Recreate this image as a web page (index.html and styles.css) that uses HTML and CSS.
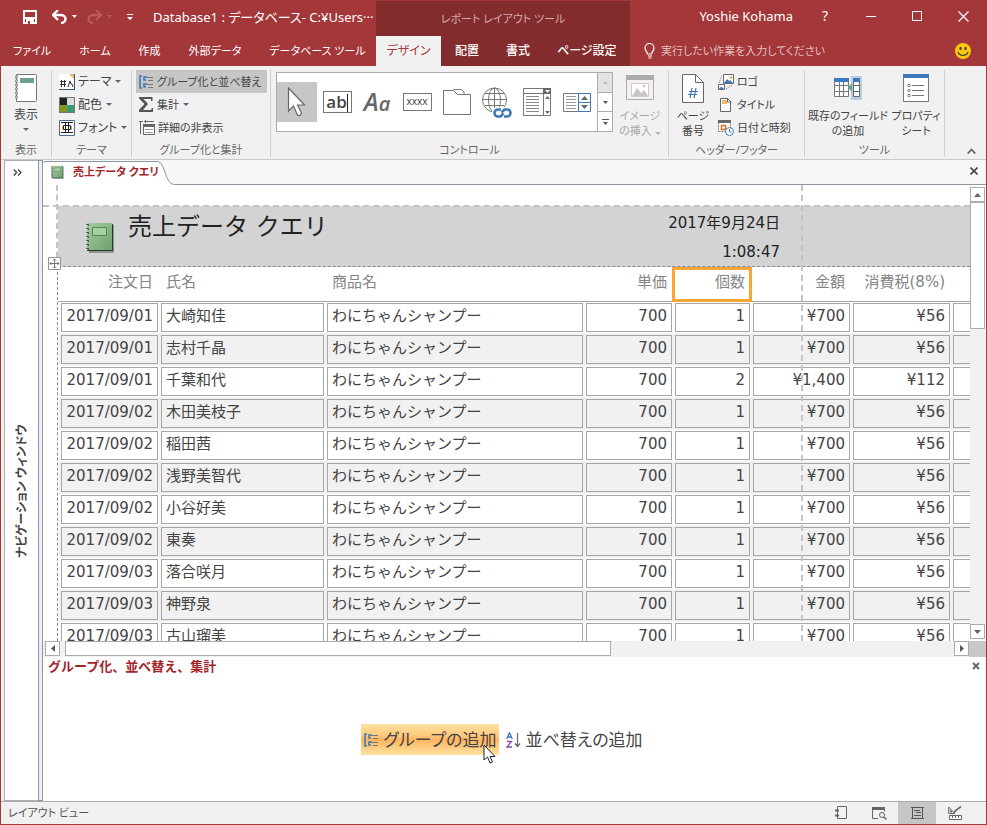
FILE: index.html
```html
<!DOCTYPE html>
<html lang="ja">
<head>
<meta charset="utf-8">
<title>Database1 : データベース</title>
<link rel="stylesheet" href="styles.css">
</head>
<body>
<div class="app">
  <header class="head">
    <div class="quick">
      <button class="qbtn" aria-label="上書き保存"><svg width="14" height="14" viewBox="0 0 14 14"><path d="M1 1h12v12H1z" fill="none" stroke="#fff" stroke-width="2"/><path d="M1 7h12v2H1zM3 9h8v5H3z" fill="#fff"/><path d="M5 11h2v3H5z" fill="#a4373a"/></svg></button>
      <button class="qbtn undo" aria-label="元に戻す"><svg width="26" height="14" viewBox="0 0 26 14"><path d="M6 0L1 5l5 5M2 5h7c6 0 6 8 0 8" fill="none" stroke="#fff" stroke-width="2.400"/><path d="M20 5h5l-2.500 3z" fill="#fff"/></svg></button>
      <button class="qbtn redo" aria-label="やり直し"><svg width="26" height="14" viewBox="0 0 26 14"><path d="M9 0l5 5-5 5M13 5H6C0 5 0 13 6 13" fill="none" stroke="#b9585b" stroke-width="2.400"/><path d="M20 5h5l-2.500 3z" fill="#b9585b"/></svg></button>
      <button class="qbtn more" aria-label="カスタマイズ"><svg width="6" height="7" viewBox="0 0 6 7"><path d="M0 0h6v1H0zM0 3h6L3 6z" fill="#fff"/></svg></button>
      <span class="apptitle">Database1 : データベース- C:¥Users···</span>
    </div>
    <div class="ctxtitle">レポート レイアウト ツール</div>
    <div class="winbar">
      <span class="user">Yoshie Kohama</span>
      <button class="wbtn help" aria-label="ヘルプ">?</button>
      <button class="wbtn" aria-label="最小化"><svg width="10" height="10"><path d="M0 5h10v1H0z" fill="#fff"/></svg></button>
      <button class="wbtn" aria-label="最大化"><svg width="10" height="10"><path d="M.5.5h9v9h-9z" fill="none" stroke="#fff"/></svg></button>
      <button class="wbtn" aria-label="閉じる"><svg width="11" height="11"><path d="M.5.5l10 10M10.500.5l-10 10" fill="none" stroke="#fff" stroke-width="1.2"/></svg></button>
    </div>
    <nav class="tabs">
      <button>ファイル</button><button>ホーム</button><button>作成</button><button>外部データ</button><button>データベース ツール</button>
    </nav>
    <nav class="tabs ctx">
      <button class="on">デザイン</button><button>配置</button><button>書式</button><button>ページ設定</button>
    </nav>
    <div class="tell">
      <svg width="12" height="16" viewBox="0 0 12 16"><path d="M3.500 11c0-2-2.500-3-2.500-6a4.500 4.500 0 0 1 9 0c0 3-2.500 4-2.500 6zM4 13h4M4.500 15h3" fill="none" stroke="#fff" stroke-width="1.200"/></svg>
      <input type="text" aria-label="操作アシスト" placeholder="実行したい作業を入力してください">
      <button class="smile" aria-label="フィードバック"><svg width="16" height="16" viewBox="0 0 16 16"><circle cx="8" cy="8" r="8" fill="#fdc70c"/><ellipse cx="5.500" cy="5.500" rx="1.200" ry="1.800" fill="#444"/><ellipse cx="10.500" cy="5.500" rx="1.200" ry="1.800" fill="#444"/><path d="M3 9c1.500 4.500 8.500 4.500 10 0" fill="none" stroke="#444" stroke-width="1.300"/></svg></button>
    </div>
  </header>

  <section class="ribbon">
    <div class="group g-view">
      <div class="gbody">
        <button class="big"><svg width="26" height="30" viewBox="0 0 26 30"><path d="M3.500 1.500h19a1 1 0 0 1 1 1v25a1 1 0 0 1-1 1h-19z" fill="#fff" stroke="#777"/><path d="M7 5h14v5H7z" fill="#6f9f90"/><path d="M2 4h3M2 8h3M2 12h3M2 16h3M2 20h3M2 24h3" stroke="#777" stroke-width="2.500"/><path d="M2.500 4h2M2.500 8h2M2.500 12h2M2.500 16h2M2.500 20h2M2.500 24h2" stroke="#fff"/></svg><span>表示</span><i class="caret"></i></button>
      </div>
      <h2>表示</h2>
    </div>
    <div class="group g-theme">
      <div class="gbody col">
        <button class="small"><svg width="16" height="16" viewBox="0 0 16 16"><path d="M0 0h16v16H0z" fill="#fff"/><path d="M0 15h16v1H0z" fill="#345678"/><path d="M15 0h1v16h-1z" fill="#345678"/><path d="M10 0h5v5z" fill="#e8b96a"/><path d="M1 7.500h6M1 10.500h6M2.500 6v7M5.500 6v7M9 13l2-6 1 3h1l1 3" fill="none" stroke="#333"/></svg>テーマ<i class="caret"></i></button>
        <button class="small"><svg width="16" height="16" viewBox="0 0 16 16"><path d="M0 0h16v16H0z" fill="#777"/><path d="M1 1h7v7H1z" fill="#222"/><path d="M8 1h7v7H8z" fill="#dbdbe0"/><path d="M1 8h7v7H1z" fill="#85961f"/><path d="M8 8h7v7H8z" fill="#3c9b72"/></svg>配色<i class="caret"></i></button>
        <button class="small"><svg width="16" height="16" viewBox="0 0 16 16"><path d="M.5.5h15v15H.5z" fill="#fff" stroke="#4a6a93"/><path d="M3 6h1v4H3zM12 6h1v4h-1z" fill="#e8a548"/><path d="M2 2.500h12M2 12.500h12M4.500 5.500h7v4h-7zM6.500 2.500v10M9.500 2.500v10" fill="none" stroke="#222"/></svg>フォント<i class="caret"></i></button>
      </div>
      <h2>テーマ</h2>
    </div>
    <div class="group g-sort">
      <div class="gbody col">
        <button class="small on"><svg width="15" height="14" viewBox="0 0 15 14"><use href="#grp"/></svg>グループ化と並べ替え</button>
        <button class="small"><svg width="15" height="15" viewBox="0 0 15 15"><path d="M0 0h13.500v4H12V2H4.500l4.500 5-5 6h8.500v-2H14v4H0v-2l5.500-6L0 1.500z" fill="#555"/></svg>集計<i class="caret"></i></button>
        <button class="small"><svg width="16" height="15" viewBox="0 0 16 15"><path d="M0 1.500h4M1.500 1v13M6.500 0v3M5 1.500h10" stroke="#666" fill="none"/><path d="M4.500 4.500h11v10h-11z" fill="#fff" stroke="#666"/><path d="M4 4h12v3H4z" fill="#666"/><path d="M6 9.500h8M6 12.500h8" stroke="#999"/></svg>詳細の非表示</button>
      </div>
      <h2>グループ化と集計</h2>
    </div>
    <div class="group g-ctl">
      <div class="gbody">
        <div class="gallery">
          <button class="on" aria-label="選択"><svg width="20" height="30" viewBox="0 0 20 30"><path d="M1.500 1v23l5-5 4 9q3 2 4-2l-4-8h7z" fill="#fff" stroke="#666" stroke-width="1.200"/></svg></button>
          <button aria-label="テキスト ボックス"><span class="abox">ab</span></button>
          <button aria-label="ラベル"><span class="aa">A<small>a</small></span></button>
          <button aria-label="ボタン"><span class="xbox">xxxx</span></button>
          <button aria-label="タブ"><svg width="28" height="26" viewBox="0 0 28 26"><path d="M.5 25.500V1.500h10l4 4h13v20z" fill="#fff" stroke="#777"/><path d="M10.500.5h8l2.500 2.500v2" fill="none" stroke="#777"/></svg></button>
          <button aria-label="ハイパーリンク"><svg width="31" height="31" viewBox="0 0 31 31"><g fill="none" stroke="#777"><circle cx="12.500" cy="13" r="12"/><ellipse cx="12.500" cy="13" rx="6" ry="12"/><path d="M12.500 1v24M1 12.500h23M3 6.500h19M3 18.500h19"/></g><rect x="10" y="20" width="21" height="11" rx="5" fill="#fff"/><g fill="none" stroke="#3f78b8" stroke-width="2.600"><path d="M19 22.500h-3a3.500 3.500 0 0 0 0 7h2.500l3-3"/><path d="M22 29.500h3a3.500 3.500 0 0 0 0-7h-2.500l-3 3"/></g></svg></button>
          <button aria-label="コンボ ボックス"><svg width="28" height="28" viewBox="0 0 28 28"><path d="M.5.5h27v27H.5zM0 5.500h28M20.500 5v23" fill="#fff" stroke="#777"/><path d="M20 0h8v6h-8z" fill="#666"/><path d="M22 2h5l-2.500 3z" fill="#fff"/><path d="M3 8.500h13M3 11.500h13M3 14.500h13M3 17.500h13M3 20.500h13M3 23.500h13" stroke="#888"/><path d="M22 11h5l-2.500-3zM22 23h5l-2.500 3z" fill="#666"/></svg></button>
          <button aria-label="リスト ボックス"><svg width="28" height="19" viewBox="0 0 28 19"><path d="M.5.5h15v18H.5z" fill="#fff" stroke="#777"/><path d="M3 3.500h10M3 6.500h10M3 9.500h10M3 12.500h10M3 15.500h10" stroke="#999"/><path d="M15.500.5h12v18h-12zM15 9.500h13" fill="#fff" stroke="#3f78b8"/><path d="M18 7h7l-3.500-4zM18 12h7l-3.500 4z" fill="#666"/></svg></button>
          <div class="gscroll">
            <button class="dis" aria-label="上へ"><svg width="5" height="3"><path d="M0 3h5L2.500 0z" fill="#bbb"/></svg></button>
            <button aria-label="下へ"><svg width="5" height="3"><path d="M0 0h5L2.500 3z" fill="#555"/></svg></button>
            <button aria-label="その他"><svg width="7" height="6"><path d="M0 0h7v1H0zM1 3h5L3.500 6z" fill="#555"/></svg></button>
          </div>
        </div>
        <button class="big dis image"><svg width="28" height="26" viewBox="0 0 28 26"><path d="M.5.5h27v24H.5z" fill="#f6f0f5" stroke="#aaa"/><path d="M0 0h28v5H0z" fill="#aaa"/><path d="M5.500 8.500h17v13h-17z" fill="#fff" stroke="#ccc"/><path d="M6 21l5-8 4 5 3-3 4 6z" fill="#c8c4ca"/><circle cx="18" cy="11" r="1.500" fill="#ccc"/></svg><span>イメージ<br>の挿入 <i class="caret"></i></span></button>
      </div>
      <h2>コントロール</h2>
    </div>
    <div class="group g-hf">
      <div class="gbody">
        <button class="big page"><svg width="22" height="29" viewBox="0 0 22 29"><path d="M.5.5h13l8 8v20H.5z" fill="#fff" stroke="#666"/><path d="M13.500.5v8h8" fill="none" stroke="#666"/><path d="M10 14l-2 10M14 14l-2 10M7 17.500h9M6 20.500h9" stroke="#3f78b8" stroke-width="1.200"/></svg><span>ページ<br>番号</span></button>
        <div class="col">
          <button class="small"><svg width="16" height="16" viewBox="0 0 16 16"><path d="M5.500.5h10v9h-10z" fill="#fff" stroke="#666"/><path d="M6 9l3-4 2 2 1-1 3 3z" fill="#3f78b8"/><circle cx="13" cy="3.500" r="1.200" fill="#e39b3c"/><path d="M.5 10.500h6v5h-6z" fill="#fff" stroke="#666"/><path d="M1 15l2-2.500 3 2.500z" fill="#3f78b8"/><path d="M1 9l3-8M8 15l6-4" stroke="#777" stroke-dasharray="1 1"/></svg>ロゴ</button>
          <button class="small"><svg width="16" height="16" viewBox="0 0 16 16"><path d="M2.500 1.500h7l3 3v10h-10z" fill="#fff" stroke="#666"/><path d="M9.500 1v4h4" fill="none" stroke="#666"/><path d="M4 3h5v4H4z" fill="#efb96c"/></svg>タイトル</button>
          <button class="small"><svg width="16" height="16" viewBox="0 0 16 16"><path d="M.5.5h12v11H.5z" fill="#fff" stroke="#777" stroke-dasharray="2 1"/><path d="M0 0h13v3H0z" fill="#666"/><path d="M3.500 5.500h4v4h-4z" fill="#fff" stroke="#d5701c" stroke-width="1.500"/><circle cx="11.500" cy="11.500" r="4" fill="#fff" stroke="#3f78b8"/><path d="M11.500 9v3h2" fill="none" stroke="#3f78b8"/></svg>日付と時刻</button>
        </div>
      </div>
      <h2>ヘッダー/フッター</h2>
    </div>
    <div class="group g-tool">
      <div class="gbody">
        <button class="big field"><svg width="28" height="24" viewBox="0 0 28 24"><path d="M17 0h11v24H17z" fill="#b9cde3"/><path d="M.5 3.500h14v17H.5zM0 9.500h15M0 15.500h15M5.500 6v15M9.500 6v15" fill="#fff" stroke="#777"/><path d="M0 2h15v4H0z" fill="#3f78b8"/><path d="M19.500 3.500h6v17h-6zM19 9.500h7M19 15.500h7" fill="#fff" stroke="#666"/><path d="M19 2h7v4h-7z" fill="#3f78b8"/><path d="M18 7v9l-4-4.500z" fill="#5ba287"/></svg><span>既存のフィールド<br>の追加</span></button>
        <button class="big prop"><svg width="26" height="28" viewBox="0 0 26 28"><path d="M.5.5h25v27H.5z" fill="#fff" stroke="#777"/><path d="M0 0h26v4H0z" fill="#3f78b8"/><path d="M9 11.500h12M9 16.500h12M9 21.500h12" stroke="#777"/><g fill="none" stroke="#777"><circle cx="6" cy="11.500" r="1.200"/><circle cx="6" cy="16.500" r="1.200"/><circle cx="6" cy="21.500" r="1.200"/></g></svg><span>プロパティ<br>シート</span></button>
      </div>
      <h2>ツール</h2>
    </div>
    <button class="collapse" aria-label="リボンを折りたたむ"><svg width="9" height="6"><path d="M.7 5.500l3.800-4 3.800 4" fill="none" stroke="#666" stroke-width="1.800"/></svg></button>
  </section>

  <main class="work">
    <aside class="nav">
      <button class="open" aria-label="ナビゲーション ウィンドウを開く"><svg width="9" height="7"><path d="M.7.5l3 3-3 3M5 .5l3 3-3 3" fill="none" stroke="#444" stroke-width="1.300"/></svg></button>
      <span>ナビゲーション ウィンドウ</span>
    </aside>
    <div class="split"></div>
    <div class="doc">
      <div class="doctabs">
        <div class="doctab"><svg width="14" height="14" viewBox="0 0 32 32"><use href="#book"/></svg>売上データ クエリ</div>
        <svg class="slope" width="16" height="24" viewBox="0 0 16 24"><path d="M0 0C6 0 6 23.500 16 23.500V24H0z" fill="#fff"/><path d="M0 .5C7 1 7 23.500 16 23.500" fill="none" stroke="#8f95a0"/></svg>
        <div class="rest"><button class="close" aria-label="閉じる"><svg width="8" height="8"><path d="M.5.5l7 7M7.500.5l-7 7" stroke="#444" stroke-width="1.600"/></svg></button></div>
      </div>
      <div class="view">
        <div class="report">
          <div class="rhead">
            <svg class="logo" width="32" height="32" viewBox="0 0 32 32"><use href="#book"/></svg>
            <h1>売上データ クエリ</h1>
            <div class="when"><div>2017年9月24日</div><div>1:08:47</div></div>
          </div>
          <table>
            <colgroup><col class="c1"><col class="c2"><col class="c3"><col class="c4"><col class="c5"><col class="c6"><col class="c7"><col></colgroup>
            <thead><tr><th class="n">注文日</th><th>氏名</th><th>商品名</th><th class="n">単価</th><th class="n sel">個数</th><th class="n">金額</th><th class="n">消費税(8%)</th><th></th></tr></thead>
            <tbody>
<tr><td class="n">2017/09/01</td><td>大崎知佳</td><td>わにちゃんシャンプー</td><td class="n">700</td><td class="n">1</td><td class="n">¥700</td><td class="n">¥56</td><td></td></tr>
<tr><td class="n">2017/09/01</td><td>志村千晶</td><td>わにちゃんシャンプー</td><td class="n">700</td><td class="n">1</td><td class="n">¥700</td><td class="n">¥56</td><td></td></tr>
<tr><td class="n">2017/09/01</td><td>千葉和代</td><td>わにちゃんシャンプー</td><td class="n">700</td><td class="n">2</td><td class="n">¥1,400</td><td class="n">¥112</td><td></td></tr>
<tr><td class="n">2017/09/02</td><td>木田美枝子</td><td>わにちゃんシャンプー</td><td class="n">700</td><td class="n">1</td><td class="n">¥700</td><td class="n">¥56</td><td></td></tr>
<tr><td class="n">2017/09/02</td><td>稲田茜</td><td>わにちゃんシャンプー</td><td class="n">700</td><td class="n">1</td><td class="n">¥700</td><td class="n">¥56</td><td></td></tr>
<tr><td class="n">2017/09/02</td><td>浅野美智代</td><td>わにちゃんシャンプー</td><td class="n">700</td><td class="n">1</td><td class="n">¥700</td><td class="n">¥56</td><td></td></tr>
<tr><td class="n">2017/09/02</td><td>小谷好美</td><td>わにちゃんシャンプー</td><td class="n">700</td><td class="n">1</td><td class="n">¥700</td><td class="n">¥56</td><td></td></tr>
<tr><td class="n">2017/09/02</td><td>東奏</td><td>わにちゃんシャンプー</td><td class="n">700</td><td class="n">1</td><td class="n">¥700</td><td class="n">¥56</td><td></td></tr>
<tr><td class="n">2017/09/03</td><td>落合咲月</td><td>わにちゃんシャンプー</td><td class="n">700</td><td class="n">1</td><td class="n">¥700</td><td class="n">¥56</td><td></td></tr>
<tr><td class="n">2017/09/03</td><td>神野泉</td><td>わにちゃんシャンプー</td><td class="n">700</td><td class="n">1</td><td class="n">¥700</td><td class="n">¥56</td><td></td></tr>
<tr><td class="n">2017/09/03</td><td>古山瑠美</td><td>わにちゃんシャンプー</td><td class="n">700</td><td class="n">1</td><td class="n">¥700</td><td class="n">¥56</td><td></td></tr>
            </tbody>
          </table>
          <div class="guide left"></div><div class="guide dots"></div><div class="guide right"></div><div class="guide top"></div>
          <svg class="move" width="13" height="13" viewBox="0 0 13 13"><path d="M.5.5h12v12H.5z" fill="#fff" stroke="#8f959c"/><path d="M6.500 2v9M2 6.500h9M5 3.500l1.500-1.500L8 3.500M5 9.500L6.500 11 8 9.500M3.500 5L2 6.500 3.500 8M9.500 5L11 6.500 9.500 8" fill="none" stroke="#777"/></svg>
        </div>
        <div class="vscroll">
          <button class="sb" aria-label="上へ"><svg width="7" height="4"><path d="M0 4h7L3.500 0z" fill="#666"/></svg></button>
          <div class="vthumb"></div><div class="track"></div>
          <button class="sb" aria-label="下へ"><svg width="7" height="4"><path d="M0 0h7L3.500 4z" fill="#666"/></svg></button>
        </div>
      </div>
      <div class="hscroll">
        <button class="sb" aria-label="左へ"><svg width="4" height="7"><path d="M4 0v7L0 3.500z" fill="#555"/></svg></button>
        <div class="hthumb"></div><div class="track"></div>
        <button class="sb" aria-label="右へ"><svg width="4" height="7"><path d="M0 0v7l4-3.500z" fill="#555"/></svg></button>
        <div class="corner"></div>
      </div>
      <section class="gpane">
        <div class="gtitle"><h2>グループ化、並べ替え、集計</h2><button class="close" aria-label="閉じる"><svg width="8" height="8"><path d="M1 1l6 6M7 1L1 7" stroke="#666" stroke-width="2"/></svg></button></div>
        <div class="gactions">
          <button class="hot"><svg width="15" height="14" viewBox="0 0 15 14"><use href="#grp"/></svg>グループの追加<svg class="cursor" width="13" height="20" viewBox="0 0 13 20"><path d="M1 1v15l3.500-3 2.500 6 2.500-1-2.500-5.500h5z" fill="#fff" stroke="#223"/></svg></button>
          <button><svg width="15" height="16" viewBox="0 0 15 16"><path d="M.7 7L3.500.7 6.300 7M1.500 5h4" fill="none" stroke="#3f78b8" stroke-width="1.300"/><path d="M1 9.500h4.500L1 15h5" fill="none" stroke="#8650a8" stroke-width="1.300"/><path d="M11.500 1v13M9 11.500l2.500 3 2.500-3" fill="none" stroke="#666" stroke-width="1.200"/></svg>並べ替えの追加</button>
        </div>
      </section>
    </div>
  </main>

  <footer class="status">
    <span>レイアウト ビュー</span>
    <button aria-label="レポート ビュー"><svg width="14" height="14" viewBox="0 0 14 14"><path d="M3.500.5h9v12h-9z" fill="none" stroke="#666"/><path d="M1 4.500h4M1 9.500h4" stroke="#666" stroke-width="2"/></svg></button>
    <button aria-label="印刷プレビュー"><svg width="15" height="14" viewBox="0 0 15 14"><path d="M6 12.500H.5v-11h12v4" fill="none" stroke="#666"/><path d="M0 1h13v3H0z" fill="#666"/><circle cx="10" cy="9" r="2.500" fill="none" stroke="#666"/><path d="M12 11l2.500 2.500" stroke="#666" stroke-width="1.500"/></svg></button>
    <button class="on" aria-label="レイアウト ビュー"><svg width="13" height="14" viewBox="0 0 13 14"><path d="M0 1.500h13M0 12.500h13M1.500 1v12M11.500 1v12" fill="none" stroke="#555"/><path d="M3 4.500h6M5 6.500h5M3 9.500h7" stroke="#555"/></svg></button>
    <button aria-label="デザイン ビュー"><svg width="15" height="14" viewBox="0 0 15 14"><path d="M.7 1v6.500h6zM2.500 4.500v1.500h1.500z" fill="none" stroke="#666"/><path d="M6 7l1-2 6-4.500" fill="none" stroke="#666" stroke-width="1.600"/><path d="M1.500 9.500h12v4h-12zM4.500 9v3M7.500 9v3M10.500 9v3" fill="#fff" stroke="#666"/></svg></button>
  </footer>
</div>
<svg class="defs" width="0" height="0" aria-hidden="true">
  <defs>
    <linearGradient id="green" x1="0" y1="0" x2="1" y2="1"><stop offset="0" stop-color="#a3cda0"/><stop offset="1" stop-color="#6fa170"/></linearGradient>
    <symbol id="book" viewBox="0 0 32 32"><path d="M6 4h25v28H6z" fill="#555" opacity=".5"/><path d="M4 3h26v27H4z" fill="#1f3f22"/><path d="M4 2h25v27H4z" fill="url(#green)"/><path d="M9.500 6.500h14v8h-14z" fill="#a9d0a5" stroke="#4f8a52"/><path d="M4.500 3v26" stroke="#555" stroke-width="3" stroke-dasharray="2 2"/><path d="M3.500 4v25" stroke="#eee" stroke-width="2" stroke-dasharray="1 3"/></symbol>
    <symbol id="grp" viewBox="0 0 15 14"><path d="M3 1H1v12h2" fill="none" stroke="#3f78b8" stroke-width="1.600"/><path d="M8 2H5v3h2M8 9H5v3h2" fill="none" stroke="#3f78b8" stroke-width="1.600"/><path d="M8 2.500h6M9 5.500h5M8 9.500h6M9 12.500h5" stroke="#777"/></symbol>
  </defs>
</svg>
</body>
</html>
```
FILE: styles.css
```css
* { box-sizing: border-box; }
body {
  margin: 0;
  font: 11px/16px "Noto Sans", "Noto Sans CJK JP", sans-serif;
  font-feature-settings: "palt";
  color: #444;
}
button, input {
  font: inherit;
  font-feature-settings: inherit;
  color: inherit;
  background: none;
  border: 0;
  padding: 0;
  margin: 0;
}
button { display: flex; align-items: center; justify-content: center; white-space: nowrap; }
h1, h2 { margin: 0; font-weight: normal; }
svg { display: block; flex: none; }
.defs { position: absolute; }
.app {
  display: flex;
  flex-direction: column;
  height: 100vh;
  border: 1px solid #a4373a;
  border-top: 0;
  background: #fff;
}

/* title bar and tabs */
.head {
  display: grid;
  grid-template-columns: 375px 254px 1fr;
  grid-template-rows: 36px 30px;
  background: #a4373a;
  color: #fff;
}
.quick { display: flex; align-items: center; padding: 0 0 2px 22px; white-space: nowrap; }
.undo { margin-left: 15px; }
.redo { margin-left: 9px; }
.more { margin-left: 14px; }
.apptitle { margin-left: 20px; font-size: 13px; }
.ctxtitle {
  display: flex;
  align-items: center;
  justify-content: center;
  border-top: 1px solid #a4373a;
  background: #832c2e;
  color: #d9a9aa;
}
.winbar { display: flex; align-items: center; justify-content: flex-end; padding: 0 0 4px; }
.user { margin-right: 9px; font-size: 13px; }
.wbtn { width: 46px; height: 32px; }
.help { font-size: 14px; }
.tabs { display: flex; }
.tabs button { padding: 0 14px; }
.tabs button:first-child { padding-left: 12px; }
.tabs.ctx { background: #832c2e; }
.tabs.ctx button { font-size: 12px; padding: 0 13px 0 14px; flex: none; font-weight: 500; }
.tabs.ctx button.on { background: #f1f1f1; color: #a4373a; width: 65px; padding: 0; font-weight: normal; }
.tell { display: flex; align-items: center; padding: 0 15px 0 14px; gap: 5px; }
.tell input { flex: 1; min-width: 0; outline: 0; }
.tell input::placeholder { color: #e3bfc0; opacity: 1; }

/* ribbon */
.ribbon {
  display: flex;
  padding: 4px 0 2px;
  background: #f1f1f1;
  border-bottom: 1px solid #c9c9c9;
}
.group {
  display: flex;
  flex-direction: column;
  height: 87px;
  border-right: 1px solid #d0d0d0;
}
.group h2 { font-size: 11px; text-align: center; color: #666; line-height: 14px; }
.gbody { display: flex; flex: 1; }
.col { display: flex; flex-direction: column; align-items: flex-start; }
.g-view { width: 51px; }
.g-theme { width: 80px; }
.g-view, .g-theme .small { font-size: 12px; }
.g-sort { width: 139px; }
.g-ctl { width: 398px; }
.g-hf { width: 136px; }
.g-tool { width: 140px; }
.small { height: 23px; gap: 3px; padding: 0 5px; text-align: left; }
.g-theme .small { padding-left: 7px; }
.g-sort .small { margin-left: 4px; padding-left: 3px; }
.small.on { background: #c6c6c6; width: 131px; }
.g-sort .small.on { justify-content: flex-start; }
.big { flex-direction: column; justify-content: flex-start; line-height: 15px; }
.big svg { margin-top: 3px; margin-bottom: 4px; }
.big.dis { color: #a8a8a8; }
.g-view .big { width: 100%; }
.caret {
  display: inline-block;
  width: 0;
  border: 3px solid transparent;
  border-top-color: #666;
  border-bottom-width: 0;
}
.dis .caret { border-top-color: #b5b5b5; }
.small .caret { margin-left: 1px; }
.g-view .caret { margin-top: 6px; }
.gallery {
  display: flex;
  align-items: center;
  width: 337px;
  height: 60px;
  margin: 2px 0 0 5px;
  border: 1px solid #ababab;
  background: #fff;
}
.gallery > button { width: 40px; height: 40px; }
.gallery > button.on { background: #c6c6c6; }
.abox {
  width: 29px;
  height: 22px;
  border: 1px solid #777;
  font: 600 17px/20px "Open Sans", sans-serif;
}
.abox::after { content: ""; display: inline-block; width: 1px; height: 18px; background: #222; vertical-align: middle; }
.aa { font: italic 600 25px/30px "Open Sans", sans-serif; color: #666; }
.aa small { font-size: 20px; }
.xbox { width: 29px; height: 18px; border: 1px solid #777; font-size: 10px; line-height: 15px; }
.gscroll { flex: 1; align-self: stretch; display: flex; flex-direction: column; border-left: 1px solid #ababab; }
.gscroll button { flex: 1; }
.gscroll button + button { border-top: 1px solid #ababab; }
.gscroll .dis { background: #e3e3e3; }
.image { width: 54px; }
.image svg { margin-top: 5px; margin-bottom: 7px; }
.page { width: 48px; }
.page svg { margin-top: 4px; margin-bottom: 5px; }
.g-hf .small { padding: 0 1px; }
.field { width: 86px; }
.prop { width: 50px; }
.field svg { margin-top: 6px; margin-bottom: 8px; }
.prop svg { margin-top: 4px; margin-bottom: 6px; }
.collapse { margin-left: auto; align-self: flex-end; width: 30px; height: 12px; }

/* work area */
.work { flex: 1; min-height: 0; display: flex; background: #f1f1f1; }
.nav {
  width: 34px;
  margin-left: 3px;
  background: #fff;
  border: 1px solid #a9adb5;
  border-right: 0;
  display: flex;
  flex-direction: column;
  align-items: center;
}
.nav .open { height: 22px; width: 28px; padding-right: 8px; }
.nav span {
  flex: 1;
  display: flex;
  justify-content: center;
  align-items: center;
  writing-mode: vertical-rl;
  text-orientation: sideways;
  transform: rotate(180deg);
  font-size: 12px;
  font-weight: bold;
  white-space: nowrap;
}
.split { width: 5px; background: #eceff1; border: 1px solid #8f95a0; }
.doc { flex: 1; min-width: 0; display: flex; flex-direction: column; background: #fff; }
.doctabs { display: flex; height: 25px; background: #f8f8f8; padding-top: 1px; }
.doctab {
  position: relative;
  z-index: 1;
  display: flex;
  align-items: center;
  gap: 9px;
  padding: 0 0 3px 7px;
  width: 115px;
  white-space: nowrap;
  color: #a4262c;
  font-weight: bold;
  background: #fff;
  border-top: 1px solid #8f95a0;
  border-top-left-radius: 3px;
}
.rest { flex: 1; display: flex; justify-content: flex-end; border-bottom: 1px solid #8f95a0; }
.close { width: 24px; }
.rest .close { height: 20px; }
.view { flex: 1; min-height: 0; display: flex; }
.report {
  position: relative;
  flex: 1;
  min-width: 0;
  overflow: hidden;
  padding: 21px 0 0 15px;
  font: 15px/20px "DejaVu Sans", "Noto Sans CJK JP", sans-serif;
  font-feature-settings: normal;
}
.rhead {
  display: flex;
  height: 61px;
  background: #d3d3d3;
  border-bottom: 1px dashed #888;
  color: #222;
}
.logo { margin: 15px 13px 0 25px; }
.rhead h1 { font-size: 24px; line-height: 42px; width: 300px; white-space: nowrap; }
.when { width: 352px; text-align: right; line-height: 29px; padding-top: 3px; }
table {
  table-layout: fixed;
  width: calc(100% + 4px);
  border-spacing: 3px;
}
.c1, .c6, .c7 { width: 97px; }
.c2 { width: 163px; }
.c3 { width: 256px; }
.c4 { width: 86px; }
.c5 { width: 75px; }
th, td { padding: 0 4px; text-align: left; white-space: nowrap; }
th { position: relative; height: 30px; padding: 0 5px 6px; font-weight: normal; color: #848484; }
th::after {
  content: "";
  position: absolute;
  left: -3px;
  right: 0;
  bottom: -2px;
  height: 1px;
  background: #a6a6a6;
}
th.sel::before {
  content: "";
  position: absolute;
  z-index: 1;
  inset: -3px -2px -2px -3px;
  border: 3px solid #faa634;
}
td { height: 29px; border: 1px solid #a6a6a6; padding-bottom: 3px; }
.n { text-align: right; }
tbody tr:nth-child(even) td { background: #f1f1f1; box-shadow: 0 0 0 2px #f1f1f1; }
.guide { position: absolute; }
.left { left: 13px; top: 0; height: 82px; border-left: 2px dashed #c4c4c4; }
.dots { left: 14px; top: 82px; bottom: 0; border-left: 1px dashed #888; }
.right { left: 758px; top: 0; bottom: 0; border-left: 2px dashed #c4c4c4; }
.top { left: 0; right: 0; top: 20px; border-top: 2px dashed #c4c4c4; }
.move { position: absolute; left: 5px; top: 72px; }
.vscroll { width: 16px; display: flex; flex-direction: column; padding: 2px 1px 2px 0; }
.sb { width: 15px; height: 15px; border: 1px solid #ababab; background: #fff; flex: none; }
.vthumb { height: 127px; border: 1px solid #ababab; }
.track { flex: 1; background: #f1f1f1; }
.hscroll { display: flex; height: 16px; padding-left: 2px; background: #f1f1f1; }
.hscroll .sb:first-child { margin-right: 5px; }
.hthumb { width: 58%; height: 15px; background: #fff; border: 1px solid #ababab; }
.corner { width: 17px; background: #c8c8c8; }
.gpane { height: 144px; }
.gtitle { display: flex; justify-content: space-between; height: 18px; padding-left: 5px; }
.gtitle h2 { font-size: 13px; line-height: 18px; font-weight: bold; color: #a4262c; font-feature-settings: normal; }
.gtitle .close { width: 20px; }
.gactions { display: flex; justify-content: center; gap: 4px; padding: 49px 22px 0 0; font-size: 17px; }
.gactions button { position: relative; height: 31px; padding: 0 3px; gap: 4px; line-height: 24px; }
.hot { background: linear-gradient(#ffe3a0, #ffc67a 40%, #ffb460 50%, #ffe3a0); }
.cursor { position: absolute; left: 122px; top: 20px; }

/* status bar */
.status {
  display: flex;
  height: 23px;
  padding: 0 12px 0 7px;
  background: #f1f1f1;
  border-top: 1px solid #ababab;
}
.status span { flex: 1; line-height: 22px; color: #555; }
.status button { width: 38px; }
.status .on { background: #c6c6c6; }
```
